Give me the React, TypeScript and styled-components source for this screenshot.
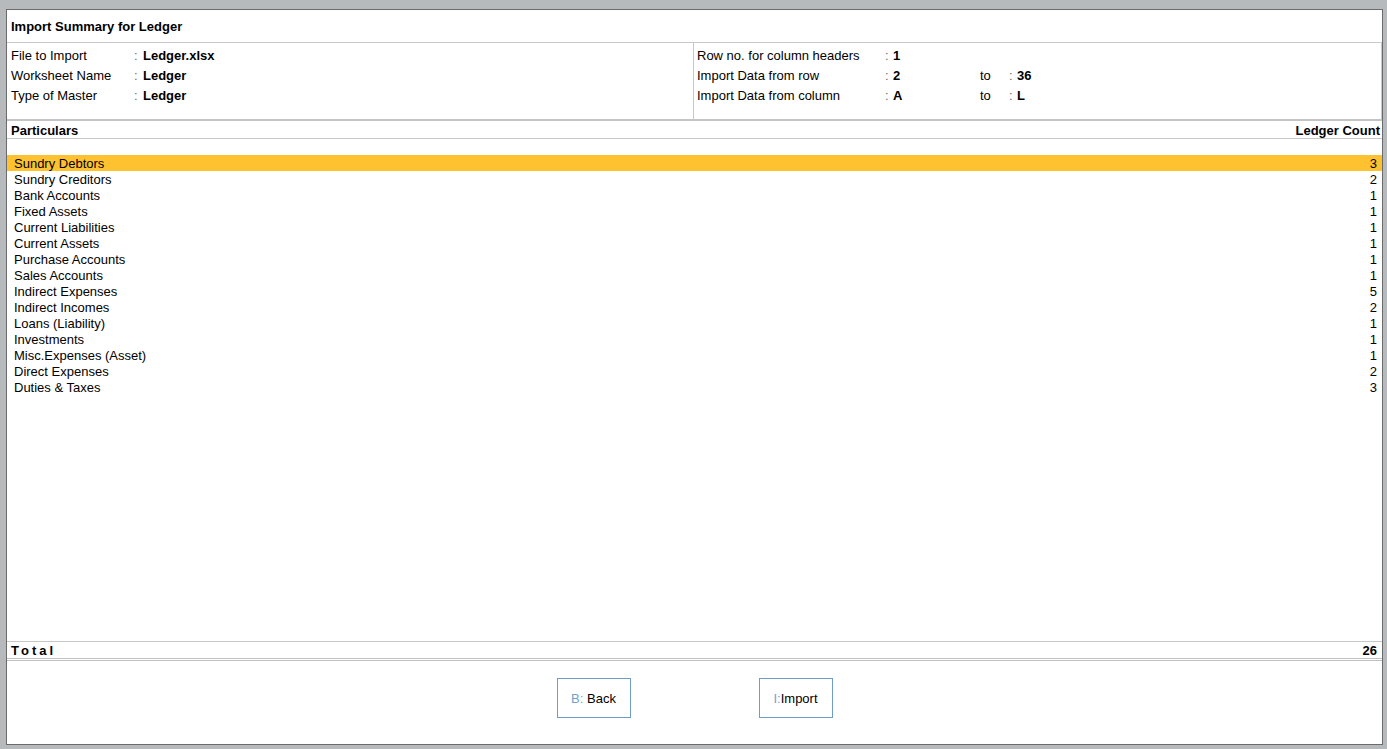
import styled, { createGlobalStyle } from 'styled-components';

interface GroupCount {
	name: string;
	count: number;
}

const groups: GroupCount[] = [
	{ name: 'Sundry Debtors', count: 3 },
	{ name: 'Sundry Creditors', count: 2 },
	{ name: 'Bank Accounts', count: 1 },
	{ name: 'Fixed Assets', count: 1 },
	{ name: 'Current Liabilities', count: 1 },
	{ name: 'Current Assets', count: 1 },
	{ name: 'Purchase Accounts', count: 1 },
	{ name: 'Sales Accounts', count: 1 },
	{ name: 'Indirect Expenses', count: 5 },
	{ name: 'Indirect Incomes', count: 2 },
	{ name: 'Loans (Liability)', count: 1 },
	{ name: 'Investments', count: 1 },
	{ name: 'Misc.Expenses (Asset)', count: 1 },
	{ name: 'Direct Expenses', count: 2 },
	{ name: 'Duties & Taxes', count: 3 },
];

function App() {
	const total = groups.reduce((sum, g) => sum + g.count, 0);

	return (
		<>
			<GlobalStyle />
			<Screen>
				<Panel>
					<TitleBar>Import Summary for Ledger</TitleBar>

					<InfoSection>
						<InfoColumn>
							<LeftRow>
								<Label>File to Import</Label>
								<Colon>:</Colon>
								<Value>Ledger.xlsx</Value>
							</LeftRow>
							<LeftRow>
								<Label>Worksheet Name</Label>
								<Colon>:</Colon>
								<Value>Ledger</Value>
							</LeftRow>
							<LeftRow>
								<Label>Type of Master</Label>
								<Colon>:</Colon>
								<Value>Ledger</Value>
							</LeftRow>
						</InfoColumn>
						<InfoColumn $divider>
							<RightRow>
								<Label>Row no. for column headers</Label>
								<Colon>:</Colon>
								<Value>1</Value>
							</RightRow>
							<RightRow>
								<Label>Import Data from row</Label>
								<Colon>:</Colon>
								<Value>2</Value>
								<ToLabel>to</ToLabel>
								<Colon>:</Colon>
								<Value>36</Value>
							</RightRow>
							<RightRow>
								<Label>Import Data from column</Label>
								<Colon>:</Colon>
								<Value>A</Value>
								<ToLabel>to</ToLabel>
								<Colon>:</Colon>
								<Value>L</Value>
							</RightRow>
						</InfoColumn>
					</InfoSection>

					<HeaderRow>
						<span>Particulars</span>
						<span>Ledger Count</span>
					</HeaderRow>

					<Body>
						{groups.map((g, i) => (
							<GroupRow key={g.name} $selected={i === 0}>
								<span>{g.name}</span>
								<span>{g.count}</span>
							</GroupRow>
						))}
					</Body>

					<TotalRow>
						<TotalLabel>Total</TotalLabel>
						<span>{total}</span>
					</TotalRow>

					<Footer>
						<KeyButton>
							<Hotkey>B:</Hotkey> Back
						</KeyButton>
						<KeyButton>
							<Hotkey>I:</Hotkey>Import
						</KeyButton>
					</Footer>
				</Panel>
			</Screen>
		</>
	);
}

export default App;

const GlobalStyle = createGlobalStyle`
	html,
	body {
		margin: 0;
		padding: 0;
		background: #b6babd;
	}

	body {
		font-family: 'Liberation Sans', Arial, sans-serif;
		font-size: 13px;
		color: #000;
	}
`;

const Screen = styled.div`
	width: 1387px;
	height: 749px;
	box-sizing: border-box;
	padding: 9px 4px 4px 6px;
`;

const Panel = styled.div`
	height: 736px;
	box-sizing: border-box;
	border: 1px solid #6b6b6b;
	background: #fff;
	display: flex;
	flex-direction: column;
`;

const TitleBar = styled.div`
	height: 32px;
	line-height: 34px;
	padding-left: 4px;
	font-weight: bold;
	border-bottom: 1px solid #c8c8c8;
`;

const InfoSection = styled.div`
	height: 76px;
	display: grid;
	grid-template-columns: 686px 1fr;
	border-bottom: 2px solid #c4c4c4;
	border-right: 1px solid #c8c8c8;
`;

const InfoColumn = styled.div<{ $divider?: boolean }>`
	padding-top: 3px;
	border-left: ${(p) => (p.$divider ? '1px solid #c8c8c8' : 'none')};
	padding-left: ${(p) => (p.$divider ? '3px' : '4px')};
`;

const LeftRow = styled.div`
	display: grid;
	grid-template-columns: 123px 9px auto;
	height: 20px;
	line-height: 20px;
`;

const RightRow = styled.div`
	display: grid;
	grid-template-columns: 188px 8px 87px 29px 8px auto;
	height: 20px;
	line-height: 20px;
`;

const Label = styled.span`
	white-space: nowrap;
`;

const Colon = styled.span`
	color: #6a6a6a;
`;

const Value = styled.span`
	font-weight: bold;
`;

const ToLabel = styled.span``;

const HeaderRow = styled.div`
	height: 17px;
	line-height: 20px;
	display: flex;
	justify-content: space-between;
	padding: 0 2px 0 4px;
	font-weight: bold;
	border-bottom: 1px solid #c8c8c8;
`;

const Body = styled.div`
	flex: 1;
	padding-top: 16px;
`;

const GroupRow = styled.div<{ $selected?: boolean }>`
	height: 16px;
	line-height: 18px;
	display: flex;
	justify-content: space-between;
	padding: 0 5px 0 7px;
	background: ${(p) => (p.$selected ? '#fec230' : 'transparent')};
`;

const TotalRow = styled.div`
	height: 16px;
	line-height: 17px;
	display: flex;
	justify-content: space-between;
	padding: 0 5px 0 4px;
	font-weight: bold;
	border-top: 1px solid #c8c8c8;
	border-bottom: 3px double #c0c0c0;
`;

const TotalLabel = styled.span`
	letter-spacing: 3px;
`;

const Footer = styled.div`
	height: 83px;
	box-sizing: border-box;
	padding-top: 17px;
	display: flex;
	justify-content: center;
	align-items: flex-start;
	gap: 128px;
`;

const KeyButton = styled.div`
	width: 74px;
	height: 40px;
	box-sizing: border-box;
	border: 1px solid #6d9dc6;
	display: flex;
	align-items: center;
	justify-content: center;
	white-space: pre;
`;

const Hotkey = styled.span`
	color: #6ea3cf;
`;
